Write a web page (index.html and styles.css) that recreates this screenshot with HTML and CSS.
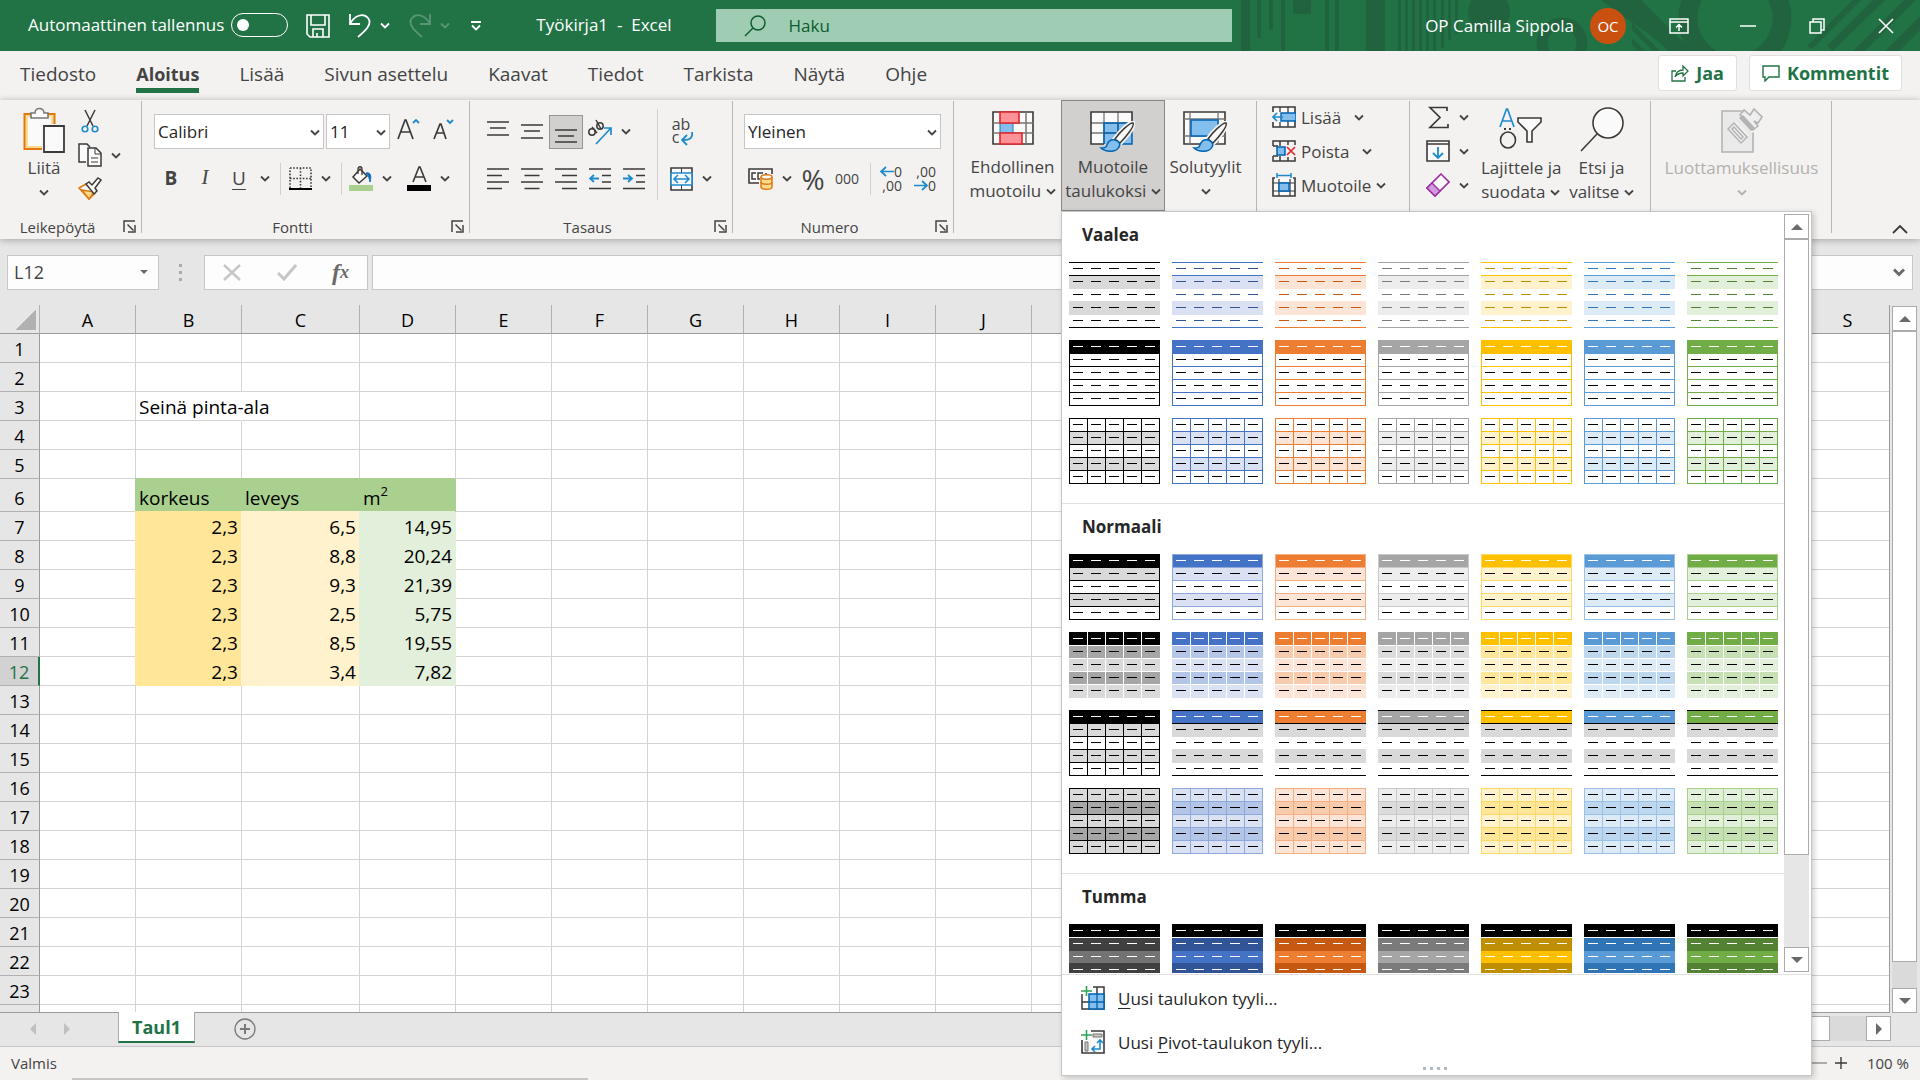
FILE: index.html
```html
<!DOCTYPE html>
<html lang="fi">
<head>
  <meta charset="UTF-8">
  <meta name="viewport" content="width=device-width, initial-scale=1.0">
  <title>Työkirja1 - Excel</title>
  <link rel="stylesheet" href="styles.css">
</head>
<body>
  <svg class="defs" aria-hidden="true">
    <symbol id="chev" viewBox="0 0 10 7"><path d="M1 1.5l4 4 4-4" fill="none" stroke="currentColor" stroke-width="1.8"/></symbol>
    <symbol id="launch" viewBox="0 0 13 13"><path d="M1 12V1h11M4.5 4.5l6 6M12 5v7H5" fill="none" stroke="currentColor" stroke-width="1.5"/></symbol>
    <symbol id="brush" viewBox="0 0 36 32">
      <path d="M34 2c-3-1-14 10-18 16l5 4C26 17 36 5 34 2z" fill="#fafafa" stroke="#f3f2f1" stroke-width="5"/>
      <path d="M34 2c-3-1-14 10-18 16l5 4C26 17 36 5 34 2z" fill="#fafafa" stroke="#3b3a39" stroke-width="1.5"/>
      <path d="M16 19c-5-1-7 2-8 5-1 3-3 3-6 3 4 4 15 5 18-1 2-3 0-6-4-7z" fill="#83beec" stroke="#0063b1" stroke-width="1.5"/>
    </symbol>
  </svg>

  <header class="titlebar">
    <svg class="titlebar-art" viewBox="0 0 685 51" aria-hidden="true">
      <g fill="#21633f">
        <path d="M6 0h9v51H6zM22 0h4v38h-4zM34 0h4v30h-4zM46 0h4v51h-4zM58 0h18v14H58zM90 0h4v51h-4zM100 0h4v51h-4zM131 0h19v51h-19z"/>
        <path d="M163 0h3v51h-3zM170 0h3v51h-3zM177 0h3v51h-3zM184 0h3v51h-3zM191 0h3v51h-3zM198 0h3v51h-3zM206 0h3v48h-3zM213 0h3v40h-3zM220 0h3v34h-3z"/>
        <circle cx="254" cy="12" r="21"/>
        <path d="M366 0h40l51 51h-20zM397 8l43 43h-7l-36-36zM397 23l28 28h-7l-21-21zM397 38l13 13h-7l-6-6z"/>
        <path d="M572 46L618 0h8l-49 49zM592 46L638 0h12l-52 51zM618 51L669 0h12l-51 51zM650 51l35-35v14l-21 21z"/>
      </g>
      <g fill="none" stroke="#21633f">
        <circle cx="327" cy="43" r="20" stroke-width="11"/>
        <circle cx="500" cy="18" r="47" stroke-width="19"/>
      </g>
    </svg>
    <label class="autosave">Automaattinen tallennus <input type="checkbox" role="switch"></label>
    <div class="quick">
      <button class="plain" aria-label="Tallenna"><svg width="24" height="24" viewBox="0 0 24 24"><path d="M1 1h22v22H4l-3-3zM5 1v10h14V1M7 23v-8h10v8M11 23v-4" fill="none" stroke="#fff" stroke-width="1.6"/></svg></button>
      <button class="plain" aria-label="Kumoa"><svg width="24" height="25" viewBox="0 0 24 25"><path d="M2 1v10h10M2 11C6 3 15-1 20 5c5 6-3 13-10 19" fill="none" stroke="#fff" stroke-width="1.8"/></svg></button>
      <button class="plain" aria-label="Kumoa, luettelo"><svg width="10" height="7"><use href="#chev"/></svg></button>
      <button class="plain faded" aria-label="Tee uudelleen"><svg width="24" height="25" viewBox="0 0 24 25"><path d="M22 1v10H12M22 11C18 3 9-1 4 5c-5 6 3 13 10 19" fill="none" stroke="#fff" stroke-width="1.8"/></svg></button>
      <button class="plain faded" aria-label="Tee uudelleen, luettelo"><svg width="10" height="7"><use href="#chev"/></svg></button>
      <button class="plain customize" aria-label="Mukauta pikatyökaluriviä"><svg width="12" height="10" viewBox="0 0 12 10"><path d="M1 1h10M2 4.5l4 4 4-4" fill="none" stroke="#fff" stroke-width="1.8"/></svg></button>
    </div>
    <div class="doc-title">Työkirja1&nbsp; -&nbsp; Excel</div>
    <label class="search">
      <svg width="22" height="22" viewBox="0 0 22 22"><circle cx="14" cy="8" r="7" fill="none" stroke="#0e5c2f" stroke-width="1.5"/><path d="M9 13l-8 8" stroke="#0e5c2f" stroke-width="1.5"/></svg>
      <input type="search" placeholder="Haku" aria-label="Haku">
    </label>
    <div class="account">OP Camilla Sippola <span class="avatar">OC</span></div>
    <div class="window-buttons">
      <button class="plain" aria-label="Valintanauhan näyttöasetukset"><svg width="20" height="16" viewBox="0 0 20 16"><path d="M1 1h18v14H1zM1 4h18M10 13V7M7 9.5L10 6.5l3 3" fill="none" stroke="#fff" stroke-width="1.5"/></svg></button>
      <button class="plain" aria-label="Pienennä"><svg width="16" height="16" viewBox="0 0 16 16"><path d="M0 8h16" stroke="#fff" stroke-width="1.5"/></svg></button>
      <button class="plain" aria-label="Palauta"><svg width="16" height="16" viewBox="0 0 16 16"><path d="M1 4h11v11H1zM4 4V1h11v11h-3" fill="none" stroke="#fff" stroke-width="1.5"/></svg></button>
      <button class="plain" aria-label="Sulje"><svg width="16" height="16" viewBox="0 0 16 16"><path d="M1 1l14 14M15 1L1 15" stroke="#fff" stroke-width="1.6"/></svg></button>
    </div>
  </header>

  <nav class="tabs">
    <a href="#">Tiedosto</a>
    <a href="#" class="active">Aloitus</a>
    <a href="#">Lisää</a>
    <a href="#">Sivun asettelu</a>
    <a href="#">Kaavat</a>
    <a href="#">Tiedot</a>
    <a href="#">Tarkista</a>
    <a href="#">Näytä</a>
    <a href="#">Ohje</a>
    <div class="share">
      <button><svg width="18" height="18" viewBox="0 0 18 18"><path d="M5 7H1v10h13v-4M4 13c1-5 4-7 8-7V2l5 5-5 5V9c-4 0-6 1-8 4z" fill="none" stroke="currentColor" stroke-width="1.3"/></svg>Jaa</button>
      <button><svg width="18" height="17" viewBox="0 0 18 17"><path d="M1 1h16v11H7l-4 4v-4H1z" fill="none" stroke="currentColor" stroke-width="1.4"/></svg>Kommentit</button>
    </div>
  </nav>

  <section class="ribbon">
    <div class="group clipboard">
      <div class="tools">
        <button class="big">
          <span class="big-icon"><svg width="42" height="46" viewBox="0 0 42 46">
            <path d="M1.5 7h30v35h-30z" fill="#fadb8f" stroke="#e07a10" stroke-width="2"/>
            <path d="M5 10h23v29H5z" fill="#fafafa"/>
            <path d="M8 11V6h4c0-6 9-6 9 0h4v5z" fill="#fafafa" stroke="#797774" stroke-width="1.6"/>
            <path d="M19 17h23v29H19z" fill="#f3f2f1"/>
            <path d="M21 19h20v26H21z" fill="#fafafa" stroke="#3b3a39" stroke-width="1.8"/></svg></span>
          Liitä<br><svg width="10" height="7"><use href="#chev"/></svg>
        </button>
        <div class="stack">
          <button class="tool single" aria-label="Leikkaa"><svg width="18" height="24" viewBox="0 0 18 24"><path d="M4 1l8 16M14 1L6 17" stroke="#3b3a39" stroke-width="1.5"/><g fill="none" stroke="#1e8bcd" stroke-width="1.6"><circle cx="4" cy="20" r="2.8"/><circle cx="14" cy="20" r="2.8"/></g></svg></button>
          <button class="tool split" aria-label="Kopioi"><svg width="24" height="24" viewBox="0 0 24 24"><path d="M8 19H1V1h8l3 3" fill="#fafafa" stroke="#3b3a39" stroke-width="1.5"/><path d="M10 5h8l5 5v13H10z" fill="#fafafa" stroke="#3b3a39" stroke-width="1.5"/><path d="M17 5v6h6M13 15h7M13 19h7" fill="none" stroke="#3b3a39"/></svg><svg width="10" height="7"><use href="#chev"/></svg></button>
          <button class="tool" aria-label="Muotoilusivellin"><svg width="24" height="24" viewBox="0 0 24 24"><path d="M8 7L1 11l10 11 6-6z" fill="#fafafa" stroke="#e07a10" stroke-width="1.6"/><path d="M4 13l12 2-5 7z" fill="#fadb8f" stroke="#e07a10" stroke-width="1.3"/><path d="M8 7l3-2 3 3 6-7 3 2-6 8 2 3-3 3z" fill="#fafafa" stroke="#3b3a39" stroke-width="1.5"/></svg></button>
        </div>
      </div>
      <div class="group-label">Leikepöytä<button class="plain launcher" aria-label="Leikepöytä, asetukset"><svg width="13" height="13"><use href="#launch"/></svg></button></div>
    </div>

    <div class="group font">
      <div class="tools rows">
        <div class="row">
          <span class="combo combo-font"><select aria-label="Fontti"><option>Calibri</option></select><svg width="10" height="7"><use href="#chev"/></svg></span>
          <span class="combo combo-size"><select aria-label="Fonttikoko"><option>11</option></select><svg width="10" height="7"><use href="#chev"/></svg></span>
          <button class="tool resize" aria-label="Suurenna fonttia"><svg width="24" height="22" viewBox="0 0 24 22"><path d="M1 21L8 2h1l7 19M4 14h9" fill="none" stroke="#3b3a39" stroke-width="1.7"/><path d="M16 5l3-3 3 3" fill="none" stroke="#1e8bcd" stroke-width="1.8"/></svg></button>
          <button class="tool resize" aria-label="Pienennä fonttia"><svg width="24" height="22" viewBox="0 0 24 22"><path d="M3 21L9 6h1l5 15M5 15h8" fill="none" stroke="#3b3a39" stroke-width="1.7"/><path d="M16 2l3 3 3-3" fill="none" stroke="#1e8bcd" stroke-width="1.8"/></svg></button>
        </div>
        <div class="row">
          <button class="tool bold">B</button>
          <button class="tool italic">I</button>
          <button class="tool underline">U</button>
          <button class="arrow" aria-label="Alleviivaus, luettelo"><svg width="10" height="7"><use href="#chev"/></svg></button>
          <span class="sep"></span>
          <button class="tool" aria-label="Reunat"><svg width="23" height="23" viewBox="0 0 23 23"><path d="M1 1h21v20M1 21V1M11.5 1v20M1 11.5h21" fill="none" stroke="#3b3a39" stroke-width="1.6" stroke-dasharray="1.6 1.6"/><path d="M0 22h23" stroke="#000" stroke-width="2"/></svg></button>
          <button class="arrow" aria-label="Reunat, luettelo"><svg width="10" height="7"><use href="#chev"/></svg></button>
          <span class="sep"></span>
          <button class="tool" aria-label="Täyttöväri"><svg width="24" height="25" viewBox="0 0 24 25"><path d="M11 3l7 7-8 7-6-6z" fill="#fafafa" stroke="#3b3a39" stroke-width="1.5"/><path d="M9 8V3c0-3 4-3 4 0v6" fill="none" stroke="#3b3a39" stroke-width="1.3"/><path d="M17 7c4-1 6 2 4 9-1-4-1-6-4-9z" fill="#0f6cbd" stroke="#0f6cbd"/><path d="M0 19h24v6H0z" fill="#a9d08e"/></svg></button>
          <button class="arrow" aria-label="Täyttöväri, luettelo"><svg width="10" height="7"><use href="#chev"/></svg></button>
          <button class="tool spaced" aria-label="Fontin väri"><svg width="24" height="25" viewBox="0 0 24 25"><path d="M6 16l6-15h1l6 15M8 11h9" fill="none" stroke="#3b3a39" stroke-width="1.6"/><path d="M0 19h24v6H0z"/></svg></button>
          <button class="arrow" aria-label="Fontin väri, luettelo"><svg width="10" height="7"><use href="#chev"/></svg></button>
        </div>
      </div>
      <div class="group-label">Fontti<button class="plain launcher" aria-label="Fontti, asetukset"><svg width="13" height="13"><use href="#launch"/></svg></button></div>
    </div>

    <div class="group align">
      <div class="tools">
        <div class="rows">
          <div class="row">
            <button class="tool" aria-label="Tasaa ylös"><svg width="22" height="24" viewBox="0 0 22 24"><path d="M0 2h22M3 8h16M0 15h22" stroke="#3b3a39" stroke-width="1.6"/></svg></button>
            <button class="tool" aria-label="Tasaa keskelle pystysuunnassa"><svg width="22" height="24" viewBox="0 0 22 24"><path d="M0 5h22M3 11h16M0 18h22" stroke="#3b3a39" stroke-width="1.6"/></svg></button>
            <button class="tool pressed" aria-label="Tasaa alas" aria-pressed="true"><svg width="22" height="24" viewBox="0 0 22 24"><path d="M0 10h22M3 16h16M0 22h22" stroke="#3b3a39" stroke-width="1.6"/></svg></button>
            <button class="tool" aria-label="Suunta"><svg width="26" height="26" viewBox="0 0 26 26"><g fill="none" stroke="#3b3a39" stroke-width="1.5"><circle cx="5" cy="13" r="3.2"/><path d="M5 8l5 6M9 1l5 9"/><circle cx="13" cy="7" r="3.2"/></g><path d="M9 25L24 9M17 9h7v7" fill="none" stroke="#1e8bcd" stroke-width="1.7"/></svg></button>
            <button class="arrow" aria-label="Suunta, luettelo"><svg width="10" height="7"><use href="#chev"/></svg></button>
          </div>
          <div class="row">
            <button class="tool" aria-label="Tasaa vasemmalle"><svg width="22" height="22" viewBox="0 0 22 22"><path d="M0 1h22M0 7.5h15M0 14h22M0 20.5h15" stroke="#3b3a39" stroke-width="1.6"/></svg></button>
            <button class="tool" aria-label="Keskitä"><svg width="22" height="22" viewBox="0 0 22 22"><path d="M0 1h22M3.5 7.5h15M0 14h22M3.5 20.5h15" stroke="#3b3a39" stroke-width="1.6"/></svg></button>
            <button class="tool" aria-label="Tasaa oikealle"><svg width="22" height="22" viewBox="0 0 22 22"><path d="M0 1h22M7 7.5h15M0 14h22M7 20.5h15" stroke="#3b3a39" stroke-width="1.6"/></svg></button>
            <button class="tool" aria-label="Pienennä sisennystä"><svg width="22" height="22" viewBox="0 0 22 22"><path d="M0 1h22M13 7.5h9M13 14h9M0 20.5h22" stroke="#3b3a39" stroke-width="1.6"/><path d="M10 10.5H1M5 7l-4 3.5L5 14" fill="none" stroke="#1e8bcd" stroke-width="1.8"/></svg></button>
            <button class="tool" aria-label="Suurenna sisennystä"><svg width="22" height="22" viewBox="0 0 22 22"><path d="M0 1h22M13 7.5h9M13 14h9M0 20.5h22" stroke="#3b3a39" stroke-width="1.6"/><path d="M0 10.5h9M5 7l4 3.5L5 14" fill="none" stroke="#1e8bcd" stroke-width="1.8"/></svg></button>
          </div>
        </div>
        <span class="sep tall"></span>
        <div class="rows">
          <div class="row">
            <button class="tool wrap-text" aria-label="Rivitä teksti"><span>ab<br>c</span><svg width="12" height="14" viewBox="0 0 12 14"><path d="M11 0c1 6-2 8-9 8M6 3L1 8l5 5" fill="none" stroke="#1e8bcd" stroke-width="1.8"/></svg></button>
          </div>
          <div class="row">
            <button class="tool" aria-label="Yhdistä ja keskitä"><svg width="23" height="24" viewBox="0 0 23 24"><path d="M1 1h21v22H1z" fill="#fafafa" stroke="#3b3a39" stroke-width="1.6"/><path d="M11.5 1v22" stroke="#3b3a39"/><path d="M1 6h21v12H1z" fill="#fafafa" stroke="#1e8bcd" stroke-width="1.6"/><path d="M4 12h15M8 8l-4 4 4 4M15 8l4 4-4 4" fill="none" stroke="#1e8bcd" stroke-width="1.6"/></svg></button>
            <button class="arrow" aria-label="Yhdistä, luettelo"><svg width="10" height="7"><use href="#chev"/></svg></button>
          </div>
        </div>
      </div>
      <div class="group-label">Tasaus<button class="plain launcher" aria-label="Tasaus, asetukset"><svg width="13" height="13"><use href="#launch"/></svg></button></div>
    </div>

    <div class="group number">
      <div class="tools rows">
        <div class="row">
          <span class="combo combo-format"><select aria-label="Lukumuotoilu"><option>Yleinen</option></select><svg width="10" height="7"><use href="#chev"/></svg></span>
        </div>
        <div class="row">
          <button class="tool" aria-label="Kirjanpidon lukumuotoilu"><svg width="26" height="22" viewBox="0 0 26 22"><path d="M11 15H1V1h23v5" fill="#fafafa" stroke="#3b3a39" stroke-width="1.6"/><path d="M8 5H4v6h4M15 5h-5v6h2M18 5v3" fill="none" stroke="#3b3a39" stroke-width="1.5"/><path d="M13 9v10c0 3 11 3 11 0V9" fill="#fadb8f" stroke="#e07a10" stroke-width="1.5"/><path d="M13 14c0 3 11 3 11 0" fill="none" stroke="#e07a10" stroke-width="1.5"/><ellipse cx="18.5" cy="9" rx="5.5" ry="2.2" fill="#fff" stroke="#e07a10" stroke-width="1.5"/></svg></button>
          <button class="arrow" aria-label="Kirjanpidon lukumuotoilu, luettelo"><svg width="10" height="7"><use href="#chev"/></svg></button>
          <button class="tool percent">%</button>
          <button class="tool thousands">000</button>
          <span class="sep"></span>
          <button class="tool decimals" aria-label="Lisää desimaaleja"><span><svg width="14" height="11" viewBox="0 0 14 11"><path d="M14 5.5H1M6 1L1 5.5 6 10" fill="none" stroke="#1e8bcd" stroke-width="1.7"/></svg>0</span><span>,00</span></button>
          <button class="tool decimals" aria-label="Vähennä desimaaleja"><span>,00</span><span><svg width="14" height="11" viewBox="0 0 14 11"><path d="M0 5.5h13M8 1l5 4.5L8 10" fill="none" stroke="#1e8bcd" stroke-width="1.7"/></svg>0</span></button>
        </div>
      </div>
      <div class="group-label">Numero<button class="plain launcher" aria-label="Numero, asetukset"><svg width="13" height="13"><use href="#launch"/></svg></button></div>
    </div>

    <div class="group styles">
      <div class="tools">
        <button class="big wide">
          <span class="big-icon"><svg width="42" height="34" viewBox="0 0 42 34"><path d="M1 1h40v32H1z" fill="#fafafa" stroke="#3b3a39" stroke-width="1.6"/><path d="M1 12h40M1 22h40M34 1v32" stroke="#797774" stroke-width="1.5"/><path d="M8 12h13v10H8z" fill="#83beec" stroke="#1e78c0"/><path d="M8 1h19v11H8zM8 22h22v11H8z" fill="#ff9297" stroke="#e3262b" stroke-width="1.6"/></svg></span>
          Ehdollinen<br>muotoilu <svg width="10" height="7"><use href="#chev"/></svg>
        </button>
        <div class="menu-anchor">
          <button class="big open" aria-expanded="true">
            <span class="big-icon"><svg width="46" height="42" viewBox="0 0 46 42"><path d="M1 1h41v32H1z" fill="#fafafa"/><path d="M14 12h28v21H14z" fill="#83beec"/><path d="M1 12h41M1 22h41M14 1v32M28 1v32" stroke="#797774" stroke-width="1.3"/><path d="M14 33V12h28M14 22h28M28 12v21M42 12v21H28" fill="none" stroke="#0063b1" stroke-width="1.5"/><path d="M14 33H1V1h41v11" fill="none" stroke="#3b3a39" stroke-width="1.6"/><use href="#brush" x="9" y="10" width="36" height="32"/></svg></span>
            Muotoile<br>taulukoksi <svg width="10" height="7"><use href="#chev"/></svg>
          </button>
          <div class="gallery">
            <div class="gallery-scroll">
              <div class="gallery-list" id="gallery"></div>
              <div class="scrollbar">
                <button aria-label="Ylös"><span class="tri up"></span></button>
                <div class="thumb"></div>
                <div class="track"></div>
                <button aria-label="Alas"><span class="tri down"></span></button>
              </div>
            </div>
            <button class="menu-item"><svg width="24" height="24" viewBox="0 0 24 24"><path d="M1 8v15h22V1H12M1 16h8M16 1v7" fill="none" stroke="#3b3a39" stroke-width="1.5"/><path d="M8 8h15v15H8z" fill="#83beec" stroke="#0063b1" stroke-width="1.5"/><path d="M8 16h15M16 8v15" stroke="#0063b1" stroke-width="1.3"/><path d="M5.5 0v10M0 5h11" stroke="#31a354" stroke-width="1.6"/></svg><span><u>U</u>usi taulukon tyyli...</span></button>
            <button class="menu-item"><svg width="24" height="24" viewBox="0 0 24 24"><path d="M1 10v13h22V1H10" fill="#fafafa" stroke="#3b3a39" stroke-width="1.6"/><path d="M12 4h9v3h-9zM4 12h3v9H4z" fill="#c8c6c4" stroke="#797774"/><path d="M19 10v9h-8M16 13l3-3 3 3M14 16l-3 3 3 3" fill="none" stroke="#1e8bcd" stroke-width="1.6"/><path d="M5.5 0v10M0 5h11" stroke="#31a354" stroke-width="1.6"/></svg><span>Uusi <u>P</u>ivot-taulukon tyyli...</span></button>
            <div class="grip"><i></i><i></i><i></i><i></i></div>
          </div>
        </div>
        <button class="big">
          <span class="big-icon"><svg width="46" height="42" viewBox="0 0 46 42"><path d="M1 1h41v32H1z" fill="#fafafa" stroke="#3b3a39" stroke-width="1.6"/><path d="M1 8h41M1 25h41M7 1v32M35 1v32" stroke="#797774" stroke-width="1.3"/><path d="M8 9h27v16H8z" fill="#83beec" stroke="#0063b1" stroke-width="1.5"/><use href="#brush" x="9" y="10" width="36" height="32"/></svg></span>
          Solutyylit<br><svg width="10" height="7"><use href="#chev"/></svg>
        </button>
      </div>
    </div>

    <div class="group cells">
      <div class="stack">
        <button class="line"><svg width="24" height="22" viewBox="0 0 24 22"><path d="M1 1h22v20H1z" fill="#fafafa" stroke="#3b3a39" stroke-width="1.6"/><path d="M8 1v20M16 1v20" stroke="#3b3a39" stroke-width="1.3"/><path d="M0 6h9v10H0z" fill="#f3f2f1"/><path d="M9 7h15v8H9z" fill="#83beec" stroke="#0063b1" stroke-width="1.4"/><path d="M11 11H1M5 7l-4 4 4 4" fill="none" stroke="#1e8bcd" stroke-width="1.6"/></svg>Lisää<svg class="far" width="10" height="7"><use href="#chev"/></svg></button>
        <button class="line"><svg width="24" height="22" viewBox="0 0 24 22"><path d="M1 6V1h22v4M1 16v5h22v-4M8 1v5M16 1v4M8 16v5M16 17v4M1 6h5M1 16h5" fill="none" stroke="#3b3a39" stroke-width="1.5"/><path d="M5 7h8v8H5z" fill="#83beec" stroke="#0063b1" stroke-width="1.5"/><path d="M15 7l8 8M23 7l-8 8" stroke="#e3262b" stroke-width="1.7"/></svg>Poista<svg class="far" width="10" height="7"><use href="#chev"/></svg></button>
        <button class="line"><svg width="24" height="24" viewBox="0 0 24 24"><path d="M3 5H1v18h22V5h-2" fill="#fafafa" stroke="#3b3a39" stroke-width="1.6"/><path d="M1 10h22M1 18h22M7 6v17M18 6v17" stroke="#3b3a39" stroke-width="1.2"/><path d="M7 10h10v8H7z" fill="#83beec" stroke="#0063b1" stroke-width="1.4"/><path d="M5 0v5M19 0v5M5 2.5h14" stroke="#1e8bcd" stroke-width="1.5"/></svg>Muotoile<svg class="near" width="10" height="7"><use href="#chev"/></svg></button>
      </div>
    </div>

    <div class="group editing">
      <div class="tools">
        <div class="stack">
          <button class="tool split" aria-label="Summa"><svg width="24" height="23" viewBox="0 0 24 23"><path d="M21 5V1.5H4L14 11.5 4 21.5h18V18" fill="none" stroke="#3b3a39" stroke-width="1.7"/></svg><svg width="10" height="7"><use href="#chev"/></svg></button>
          <button class="tool split" aria-label="Täyttö"><svg width="24" height="22" viewBox="0 0 24 22"><path d="M1 1h22v20H1zM1 4h22" fill="#fafafa" stroke="#3b3a39" stroke-width="1.6"/><path d="M12 7v11M7 13l5 5 5-5" fill="none" stroke="#1e8bcd" stroke-width="1.8"/></svg><svg width="10" height="7"><use href="#chev"/></svg></button>
          <button class="tool split" aria-label="Tyhjennä"><svg width="24" height="24" viewBox="0 0 24 24"><path d="M15 1l8 8L9 23l-8-8z" fill="#fafafa" stroke="#9b2fa0" stroke-width="1.6"/><path d="M6 10l8 8-5 5-8-8z" fill="#d59add" stroke="#9b2fa0" stroke-width="1.4"/></svg><svg width="10" height="7"><use href="#chev"/></svg></button>
        </div>
        <button class="big">
          <span class="big-icon"><svg width="44" height="42" viewBox="0 0 44 42"><path d="M1 20L7.5 2h1L15 20M4 14h9" fill="none" stroke="#1e8bcd" stroke-width="1.7"/><ellipse cx="9" cy="33" rx="7.5" ry="8" fill="none" stroke="#3b3a39" stroke-width="1.6"/><path d="M5 22h2M10 22h2" stroke="#3b3a39" stroke-width="2"/><path d="M19 11h23v4l-9 9v11h-5V24l-9-9z" fill="#fafafa" stroke="#3b3a39" stroke-width="1.6"/></svg></span>
          Lajittele ja<br>suodata <svg width="10" height="7"><use href="#chev"/></svg>
        </button>
        <button class="big">
          <span class="big-icon"><svg width="44" height="46" viewBox="0 0 44 46"><circle cx="28" cy="16" r="15" fill="#fafafa" stroke="#3b3a39" stroke-width="1.6"/><path d="M17 27L1 44" stroke="#3b3a39" stroke-width="1.6"/></svg></span>
          Etsi ja<br>valitse <svg width="10" height="7"><use href="#chev"/></svg>
        </button>
      </div>
    </div>

    <div class="group sensitivity">
      <button class="big" disabled>
        <span class="big-icon"><svg width="42" height="46" viewBox="0 0 42 46"><path d="M1 4h31v41H1z" fill="#eaeaea" stroke="#b3b3b3" stroke-width="1.6"/><path d="M6 22l9-8 13 14-8 8zM17 9l6-7 15 2 4 8-5 11-6 3z" fill="#f3f2f1"/><path d="M7 22l6-6 13 14-6 6zM11 22l9 10 2-2-9-10z" fill="#eee" stroke="#b3b3b3" stroke-width="1.5"/><path d="M19 8l4-5 6 5 4-6 8 8-4 6-4-2 4 5-5 4z" fill="#eee" stroke="#b3b3b3" stroke-width="1.6"/><path d="M18 11l4-3 12 13-4 3z" fill="#b3b3b3"/></svg></span>
        Luottamuksellisuus<br><svg width="10" height="7"><use href="#chev"/></svg>
      </button>
    </div>
    <button class="plain collapse" aria-label="Kutista valintanauha"><svg width="16" height="10" viewBox="0 0 16 10"><path d="M1 9l7-7 7 7" fill="none" stroke="#3b3a39" stroke-width="1.8"/></svg></button>
  </section>

  <div class="formula-bar">
    <div class="name-box"><input type="text" value="L12" aria-label="Nimiruutu"><span class="tri down small"></span></div>
    <div class="dots"><i></i><i></i><i></i></div>
    <div class="fx-box">
      <button class="plain" aria-label="Peruuta"><svg width="18" height="17" viewBox="0 0 18 17"><path d="M1 1l16 15M17 1L1 16" stroke="#c6c6c6" stroke-width="2.4"/></svg></button>
      <button class="plain" aria-label="Hyväksy"><svg width="20" height="17" viewBox="0 0 20 17"><path d="M1 9l6 6L19 1" fill="none" stroke="#c6c6c6" stroke-width="3"/></svg></button>
      <button class="plain fx" aria-label="Lisää funktio">f<span>x</span></button>
    </div>
    <div class="formula-input"><input type="text" aria-label="Kaavarivi"><svg width="12" height="9" viewBox="0 0 12 9"><path d="M1 1.5l5 5 5-5" fill="none" stroke="#6a6a6a" stroke-width="3"/></svg></div>
  </div>

  <main class="sheet">
    <div class="sheet-grid"><table id="grid"></table></div>
    <div class="scrollbar">
      <button aria-label="Ylös"><span class="tri up"></span></button>
      <div class="thumb"></div>
      <div class="track"></div>
      <button aria-label="Alas"><span class="tri down"></span></button>
    </div>
  </main>

  <div class="sheet-bar">
    <button class="plain" aria-label="Edellinen taulukko"><span class="tri left"></span></button>
    <button class="plain" aria-label="Seuraava taulukko"><span class="tri right"></span></button>
    <button class="sheet-tab">Taul1</button>
    <button class="plain" aria-label="Uusi taulukko"><svg width="22" height="22" viewBox="0 0 22 22"><circle cx="11" cy="11" r="10" fill="none" stroke="#797979" stroke-width="1.3"/><path d="M11 6v10M6 11h10" stroke="#797979" stroke-width="2"/></svg></button>
    <div class="scrollbar horizontal">
      <button aria-label="Vasemmalle"><span class="tri left"></span></button>
      <div class="thumb"></div>
      <div class="track"></div>
      <button aria-label="Oikealle"><span class="tri right"></span></button>
    </div>
  </div>

  <footer class="status">
    <span>Valmis</span>
    <input type="range" aria-label="Zoomaus">
    <button class="plain" aria-label="Lähennä"><svg width="12" height="12" viewBox="0 0 12 12"><path d="M6 0v12M0 6h12" stroke="#3b3a39" stroke-width="1.4"/></svg></button>
    <span>100 %</span>
  </footer>

  <script src="script.js"></script>
</body>
</html>
```
FILE: styles.css
```css
* {
  box-sizing: border-box;
}
body {
  margin: 0;
  height: 100vh;
  display: flex;
  flex-direction: column;
  overflow: hidden;
  font-family: "Open Sans", "Noto Sans", sans-serif;
  font-size: 17px;
  color: #444;
  background: #e6e6e6;
}
button, input, select {
  font: inherit;
  color: inherit;
  border: none;
  background: none;
  padding: 0;
  margin: 0;
}
input:focus, select:focus {
  outline: none;
}
svg {
  flex: none;
}
.defs {
  position: absolute;
  width: 0;
  height: 0;
}
.plain {
  display: flex;
  align-items: center;
  justify-content: center;
}

/* title bar */
.titlebar {
  position: relative;
  display: flex;
  align-items: center;
  height: 51px;
  flex: none;
  padding-left: 28px;
  background: #217346;
  color: #fff;
}
.titlebar > * {
  position: relative;
}
.titlebar .titlebar-art {
  position: absolute;
  right: 0;
  top: 0;
  width: 685px;
  height: 51px;
}
.autosave {
  display: flex;
  align-items: center;
  gap: 7px;
  padding-bottom: 2px;
  white-space: nowrap;
}
.autosave input {
  appearance: none;
  width: 57px;
  height: 24px;
  border: 1px solid #fff;
  border-radius: 12px;
  display: flex;
  align-items: center;
  padding-left: 5px;
}
.autosave input::before {
  content: "";
  width: 12px;
  height: 12px;
  border-radius: 50%;
  background: #fff;
}
.quick {
  display: flex;
  align-items: center;
  gap: 8px;
  margin-left: 18px;
}
.quick .plain:nth-child(2), .quick .plain:nth-child(4) {
  margin-left: 10px;
}
.quick .customize {
  margin-left: 12px;
}
.faded {
  opacity: 0.25;
}
.doc-title {
  margin-left: 54px;
  padding-bottom: 3px;
  white-space: nowrap;
}
.search {
  display: flex;
  align-items: center;
  gap: 23px;
  flex: 1;
  max-width: 516px;
  height: 33px;
  margin-left: 44px;
  padding-left: 28px;
  background: #9fcdb3;
  color: #0e5c2f;
}
.search input {
  flex: 1;
}
.search input::placeholder {
  color: #0e5c2f;
}
.account {
  display: flex;
  align-items: center;
  gap: 16px;
  margin-left: auto;
}
.avatar {
  width: 36px;
  height: 36px;
  border-radius: 50%;
  background: #ca5010;
  font-size: 15px;
  line-height: 36px;
  text-align: center;
}
.window-buttons {
  display: flex;
  margin-left: 18px;
}
.window-buttons .plain {
  width: 69px;
}

/* tabs */
.tabs {
  display: flex;
  align-items: flex-start;
  gap: 40px;
  height: 49px;
  flex: none;
  padding: 4px 18px 0 20px;
  background: #f3f2f1;
  font-size: 19px;
}
.tabs a {
  color: #444;
  text-decoration: none;
  line-height: 28px;
  padding-top: 5px;
  border-bottom: 5px solid transparent;
}
.tabs a.active {
  font-weight: 700;
  font-size: 18px;
  border-color: #217346;
}
.share {
  display: flex;
  gap: 12px;
  margin-left: auto;
}
.share button {
  display: flex;
  align-items: center;
  gap: 7px;
  height: 36px;
  padding: 0 12px;
  border: 1px solid #e1dfdd;
  border-radius: 3px;
  background: #fff;
  color: #217346;
  font-size: 18px;
  font-weight: 700;
}

/* ribbon */
.ribbon {
  position: relative;
  z-index: 2;
  display: flex;
  height: 139px;
  flex: none;
  background: #f3f2f1;
  box-shadow: 0 1px 7px rgba(0, 0, 0, 0.3);
}
.group {
  position: relative;
  display: flex;
  flex-direction: column;
  flex: none;
}
.group::after {
  content: "";
  position: absolute;
  right: 0;
  top: 1px;
  bottom: 6px;
  width: 1px;
  background: #b9b7b5;
}
.tools {
  display: flex;
  height: 111px;
}
.group-label {
  display: flex;
  align-items: center;
  justify-content: center;
  height: 28px;
  padding-right: 27px;
  padding-top: 3px;
  font-size: 15px;
}
.launcher {
  position: absolute;
  right: 6px;
}
.rows {
  display: flex;
  flex-direction: column;
  gap: 12px;
  padding-top: 14px;
}
.row {
  display: flex;
  align-items: center;
  height: 35px;
}
.stack {
  display: flex;
  flex-direction: column;
}
.tool {
  display: flex;
  align-items: center;
  justify-content: center;
  width: 34px;
  height: 34px;
}
.tool.split {
  width: auto;
  gap: 9px;
}
.tool.pressed {
  background: #d2d0ce;
  border: 1px solid #979593;
}
.tool.spaced {
  margin-left: 6px;
}
.tool.resize {
  padding-bottom: 6px;
}
.arrow {
  display: flex;
  align-items: center;
  justify-content: center;
  width: 18px;
  height: 34px;
}
.bold, .italic, .underline {
  font-size: 19px;
  padding-bottom: 2px;
}
.bold {
  font-weight: 700;
}
.italic {
  font-family: "Liberation Serif", serif;
  font-style: italic;
  font-size: 21px;
}
.underline {
  text-decoration: underline;
  text-underline-offset: 4px;
}
.sep {
  width: 1px;
  height: 32px;
  margin: 0 2px 0 6px;
  background: #d2d0ce;
}
.sep.tall {
  height: 91px;
  margin: 9px 6px 0;
}
.combo {
  position: relative;
  display: flex;
  height: 35px;
  margin-right: 2px;
}
.combo select {
  appearance: none;
  flex: 1;
  min-width: 0;
  padding-left: 3px;
  border: 1px solid #c8c6c4;
  background: #fff;
  color: #262626;
}
.combo svg {
  position: absolute;
  right: 4px;
  top: 15px;
  pointer-events: none;
}
.combo-font {
  width: 170px;
}
.combo-size {
  width: 64px;
}
.combo-format {
  width: 197px;
}
.wrap-text {
  position: relative;
  font-size: 16px;
  line-height: 13px;
  text-align: left;
  padding-bottom: 2px;
}
.wrap-text svg {
  position: absolute;
  right: 5px;
  bottom: 3px;
}
.percent {
  font-size: 28px;
}
.thousands {
  font-size: 14px;
}
.decimals {
  flex-direction: column;
  align-items: flex-end;
  padding-right: 5px;
  font-size: 14px;
  line-height: 14px;
}
.big {
  width: 81px;
  height: 111px;
  padding: 10px 0 7px;
  border: 1px solid transparent;
  display: block;
  line-height: 24px;
  text-align: center;
  vertical-align: top;
  white-space: nowrap;
}
.big > svg {
  vertical-align: 2px;
}
.big-icon {
  display: flex;
  justify-content: center;
  height: 44px;
}
.big.wide {
  width: 97px;
}
.big.open {
  width: 104px;
  background: #d2d0ce;
  border-color: #8a8886;
}
.big:disabled {
  color: #b3b0ad;
}
.clipboard .big, .editing .big, .sensitivity .big {
  padding: 6px 0;
}
.clipboard .big-icon, .editing .big-icon, .sensitivity .big-icon {
  height: 49px;
}
.clipboard {
  width: 142px;
}
.clipboard .big {
  width: 78px;
  padding-left: 10px;
}
.clipboard .tool {
  justify-content: flex-start;
}
.clipboard .single {
  padding-left: 3px;
}
.clipboard .stack {
  padding-top: 4px;
}
.font {
  width: 328px;
  padding-left: 12px;
}
.align {
  width: 263px;
  padding-left: 11px;
}
.number {
  width: 221px;
  padding-left: 11px;
}
.font .group-label, .align .group-label, .number .group-label {
  padding-right: 39px;
}
.styles {
  width: 303px;
  padding-left: 10px;
}
.cells {
  width: 153px;
  padding-left: 15px;
}
.line {
  display: flex;
  align-items: center;
  gap: 5px;
  height: 34px;
}
.line .far {
  margin-left: 8px;
}
.editing {
  width: 241px;
  padding-left: 16px;
}
.editing .stack {
  width: 54px;
}
.editing .tool {
  justify-content: flex-start;
}
.sensitivity {
  width: 181px;
}
.sensitivity .big {
  width: 100%;
}
.collapse {
  margin: auto 12px 5px auto;
}

/* table style gallery */
.menu-anchor {
  position: relative;
  z-index: 3;
}
.gallery {
  position: absolute;
  left: 0;
  top: 111px;
  width: 751px;
  height: calc(100vh - 215px);
  display: flex;
  flex-direction: column;
  background: #fff;
  border: 1px solid #c6c6c6;
  box-shadow: 2px 2px 6px rgba(0, 0, 0, 0.2);
  color: #262626;
}
.gallery-scroll {
  display: flex;
  flex: 1;
  min-height: 0;
  padding-right: 2px;
  border-bottom: 1px solid #e1e1e1;
}
.gallery-list {
  flex: 1;
  overflow: hidden;
  margin-bottom: 1px;
}
.gallery-section {
  padding-bottom: 19px;
  border-bottom: 1px solid #e1e1e1;
}
.gallery-section h3 {
  margin: 0;
  padding-left: 20px;
  height: 50px;
  line-height: 45px;
  font-size: 17px;
  font-weight: 700;
}
.swatches {
  display: grid;
  grid-template-columns: repeat(7, 91px);
  gap: 12px;
  padding-left: 7px;
}
.swatches button, .swatches svg {
  display: block;
  width: 91px;
  height: 66px;
}
.gallery .scrollbar {
  margin: 2px 0;
}
.menu-item {
  display: flex;
  align-items: center;
  gap: 13px;
  height: 44px;
  padding: 2px 0 0 19px;
  flex: none;
}
.menu-item u {
  text-underline-offset: 3px;
}
.grip {
  display: flex;
  justify-content: center;
  gap: 4px;
  height: 12px;
  padding: 4px 4px 0 0;
}
.grip i {
  width: 3px;
  height: 3px;
  background: #b4bbc8;
}

/* scroll bars */
.scrollbar {
  display: flex;
  flex-direction: column;
  flex: none;
  width: 25px;
}
.scrollbar button {
  display: flex;
  align-items: center;
  justify-content: center;
  width: 25px;
  height: 25px;
  flex: none;
  background: #fff;
  border: 1px solid #ababab;
}
.scrollbar .thumb {
  flex: 87 0 0;
  background: #fff;
  border: 1px solid #ababab;
}
.scrollbar .track {
  flex: 13 0 0;
  background: #e6e6e6;
}
.tri {
  width: 0;
  height: 0;
  border: 6px solid transparent;
}
.tri.up {
  border-top: none;
  border-bottom-color: #6a6a6a;
}
.tri.down {
  border-bottom: none;
  border-top-color: #6a6a6a;
}
.tri.left {
  border-left: none;
  border-right-color: #6a6a6a;
}
.tri.right {
  border-right: none;
  border-left-color: #6a6a6a;
}
.tri.small {
  border-width: 4px;
  border-bottom: none;
}

/* formula bar */
.formula-bar {
  display: flex;
  align-items: center;
  height: 66px;
  flex: none;
  padding: 0 7px;
}
.name-box, .fx-box, .formula-input {
  display: flex;
  align-items: center;
  height: 35px;
  background: #fdfdfd;
  border: 1px solid #c6c6c6;
}
.name-box {
  width: 152px;
  padding: 0 10px 0 6px;
  font-size: 18px;
}
.name-box input {
  flex: 1;
  min-width: 0;
}
.dots {
  display: flex;
  flex-direction: column;
  gap: 4px;
  width: 45px;
  padding-left: 20px;
}
.dots i {
  width: 3px;
  height: 3px;
  background: #ababab;
}
.fx-box {
  width: 164px;
  justify-content: space-between;
  padding: 0 18px;
}
.fx {
  font: italic bold 24px/24px "Liberation Serif", serif;
  color: #6a6a6a;
}
.fx span {
  font-size: 18px;
}
.formula-input {
  flex: 1;
  margin-left: 4px;
  padding-right: 7px;
}
.formula-input input {
  flex: 1;
}

/* sheet */
.sheet {
  display: flex;
  flex: 1;
  min-height: 0;
  gap: 2px;
  padding-right: 3px;
}
.sheet-grid {
  flex: 1;
  overflow: hidden;
  border-right: 1px solid #9b9b9b;
  border-bottom: 1px solid #9b9b9b;
}
#grid {
  table-layout: fixed;
  width: 0;
  border-collapse: separate;
  border-spacing: 0;
  font-size: 19px;
  line-height: 22px;
  color: #000;
}
#grid th, #grid td {
  padding: 2px 3px;
  height: 29px;
  white-space: nowrap;
  vertical-align: bottom;
}
#grid th {
  padding: 2px 0;
  background: #e6e6e6;
  border-right: 1px solid #b1b1b1;
  border-bottom: 1px solid #b1b1b1;
  font-size: 18px;
  font-weight: 400;
}
#grid thead th {
  border-bottom-color: #9b9b9b;
}
#grid tbody th {
  border-right-color: #9b9b9b;
}
#grid .corner {
  background: linear-gradient(135deg, transparent 50%, #b1b1b1 50%) 15px 4px / 21px 21px no-repeat #e6e6e6;
}
#grid td {
  background: #fff;
  border-right: 1px solid #d4d4d4;
  border-bottom: 1px solid #d4d4d4;
}
#grid .tall th, #grid .tall td {
  height: 33px;
}
#grid tbody .current {
  background: #d2d2d2;
  color: #217346;
  border-right: 2px solid #217346;
}
#grid .spill {
  border-right-color: #fff;
}
#grid .num {
  text-align: right;
}
#grid .head {
  background: #a9d08e;
  border-color: #a9d08e;
  box-shadow: -1px -1px 0 #a9d08e;
}
#grid .height {
  background: #ffe699;
  border-color: #ffe699;
  box-shadow: -1px -1px 0 #ffe699;
}
#grid .width {
  background: #fff2cc;
  border-color: #fff2cc;
  box-shadow: -1px -1px 0 #fff2cc;
}
#grid .area {
  background: #e2efda;
  border-color: #e2efda;
  box-shadow: -1px -1px 0 #e2efda;
}
#grid sup {
  font-size: 13px;
  line-height: 0;
  vertical-align: 9px;
}
.sheet .scrollbar {
  padding-top: 1px;
}
.sheet .scrollbar .thumb {
  flex-grow: 96;
}
.sheet .scrollbar .track {
  flex-grow: 4;
  background: #dadada;
}
.sheet-bar {
  display: flex;
  align-items: flex-start;
  height: 33px;
  flex: none;
  padding: 0 29px 0 30px;
}
.sheet-bar > .plain {
  height: 32px;
}
.sheet-bar > .plain .tri {
  opacity: 0.3;
}
.sheet-bar > .plain:nth-child(2) {
  margin-left: 28px;
}
.sheet-tab {
  width: 77px;
  height: 31px;
  margin: -1px 39px 0 48px;
  background: #fff;
  border: 1px solid #ababab;
  border-top: none;
  border-bottom: 2px solid #217346;
  color: #217346;
  font-size: 18px;
  font-weight: 700;
}
.horizontal {
  flex-direction: row;
  width: 780px;
  height: 25px;
  margin: 3px 0 0 auto;
}
.horizontal .thumb {
  flex-grow: 95;
}
.horizontal .track {
  flex-grow: 5;
  background: #dadada;
}

/* status bar */
.status {
  display: flex;
  align-items: center;
  height: 34px;
  flex: none;
  padding: 0 11px 2px;
  border-top: 1px solid #c8c6c4;
  background: linear-gradient(#c8c6c4, #c8c6c4) 72px 100% / 516px 2px no-repeat #f3f2f1;
  font-size: 15px;
}
.status input {
  appearance: none;
  width: 150px;
  height: 2px;
  margin: 0 8px 0 auto;
  background: #ababab;
}
.status .plain {
  margin-right: 20px;
}
```
FILE: script.js
```js
const THEMES = [
  { base: "#000000", dark: "#000000", band: "#d9d9d9", band2: "#a6a6a6", line: "#000000", deep: "#404040", mid: "#737373" },
  { base: "#4472c4", dark: "#305496", band: "#d9e1f2", band2: "#b4c6e7", line: "#8ea9db" },
  { base: "#ed7d31", dark: "#c65911", band: "#fce4d6", band2: "#f8cbad", line: "#f4b084" },
  { base: "#a5a5a5", dark: "#7b7b7b", band: "#ededed", band2: "#dbdbdb", line: "#c9c9c9" },
  { base: "#ffc000", dark: "#bf8f00", band: "#fff2cc", band2: "#ffe699", line: "#ffd966" },
  { base: "#5b9bd5", dark: "#2f75b5", band: "#ddebf7", band2: "#bdd7ee", line: "#9bc2e6" },
  { base: "#70ad47", dark: "#548235", band: "#e2efda", band2: "#c6e0b4", line: "#a9d08e" }
];

// fills: colour of each of the five rows, h: y index of the horizontal rules, v: x index of the vertical rules
const STYLES = {
  lines: t => ({ fills: ["#fff", t.band, "#fff", t.band, "#fff"], h: [0, 1, 5], v: [], line: t.base, dash: t.dark }),
  header: t => ({ fills: [t.base, "#fff", "#fff", "#fff", "#fff"], h: [0, 1, 2, 3, 4, 5], v: [0, 5], line: t.base, head: "#fff" }),
  grid: t => ({ fills: ["#fff", t.band, "#fff", t.band, "#fff"], h: [0, 1, 2, 3, 4, 5], v: [0, 1, 2, 3, 4, 5], line: t.base }),
  banded: t => ({ fills: [t.base, t.band, "#fff", t.band, "#fff"], h: [0, 1, 2, 3, 4, 5], v: [0, 5], line: t.line, head: "#fff" }),
  tiles: t => ({ fills: [t.base, t.band2, t.band, t.band2, t.band], h: [1, 2, 3, 4], v: [1, 2, 3, 4], line: "#fff", head: "#fff" }),
  ruled: (t, i) => ({ fills: [t.base, "#d9d9d9", "#fff", "#d9d9d9", "#fff"], h: i ? [0, 1, 5] : [0, 1, 2, 3, 4, 5], v: i ? [] : [0, 1, 2, 3, 4, 5], line: "#000", head: "#fff" }),
  filled: t => ({ fills: [t.band, t.band2, t.band, t.band2, t.band], h: [0, 1, 2, 3, 4, 5], v: [0, 1, 2, 3, 4, 5], line: t.line }),
  dark: t => ({ fills: ["#000", t.deep || t.dark, t.mid || t.base, t.deep || t.dark, t.mid || t.base], h: [1], v: [], line: "#fff", dash: "#fff" })
};

const SECTIONS = [
  ["Vaalea", ["lines", "header", "grid"]],
  ["Normaali", ["banded", "tiles", "ruled", "filled"]],
  ["Tumma", ["dark"]]
];

function rect(x, y, w, h, fill) {
  return `<rect x="${x}" y="${y}" width="${w}" height="${h}" fill="${fill}"/>`;
}

function swatch(s) {
  let out = "";
  // odd rows last, their fill runs one pixel into the next row
  [0, 2, 4, 1, 3].forEach(r => { out += rect(0, r * 13, 91, 14, s.fills[r]); });
  s.h.forEach(r => { out += rect(0, r * 13, 91, 1, s.line); });
  s.v.forEach(c => { out += rect(c * 18, 0, 1, 66, s.line); });
  for (let r = 0; r < 5; r++) {
    const color = r === 0 && s.head ? s.head : s.dash || "#000";
    for (let c = 0; c < 5; c++) out += rect(c * 18 + 4, r * 13 + 6, 10, 1, color);
  }
  return `<svg viewBox="0 0 91 66" shape-rendering="crispEdges">${out}</svg>`;
}

document.getElementById("gallery").innerHTML = SECTIONS.map(([title, kinds]) => {
  let n = 0;
  const items = kinds.map(kind => THEMES.map((t, i) =>
    `<button aria-label="${title} ${++n}">${swatch(STYLES[kind](t, i))}</button>`).join("")).join("");
  return `<div class="gallery-section"><h3>${title}</h3><div class="swatches">${items}</div></div>`;
}).join("");

const COLUMNS = "ABCDEFGHIJKLMNOPQRS".split("");
const WIDTHS = { B: 106, C: 118 };
const CELLS = {
  B3: ["Seinä pinta-ala", "spill"],
  B6: ["korkeus", "head"],
  C6: ["leveys", "head"],
  D6: ["m<sup>2</sup>", "head"]
};
[["6,5", "14,95"], ["8,8", "20,24"], ["9,3", "21,39"], ["2,5", "5,75"], ["8,5", "19,55"], ["3,4", "7,82"]].forEach(([w, a], i) => {
  CELLS["B" + (i + 7)] = ["2,3", "num height"];
  CELLS["C" + (i + 7)] = [w, "num width"];
  CELLS["D" + (i + 7)] = [a, "num area"];
});

let html = `<colgroup><col style="width:40px">${COLUMNS.map(c => `<col style="width:${WIDTHS[c] || 96}px">`).join("")}</colgroup>`;
html += `<thead><tr><th class="corner"></th>${COLUMNS.map(c => `<th>${c}</th>`).join("")}</tr></thead><tbody>`;
for (let r = 1; r <= 23; r++) {
  html += `<tr${r === 6 ? ' class="tall"' : ""}><th${r === 12 ? ' class="current"' : ""}>${r}</th>`;
  html += COLUMNS.map(c => {
    const [text, cls] = CELLS[c + r] || ["", ""];
    return `<td class="${cls}">${text}</td>`;
  }).join("") + "</tr>";
}
// the last row is only partly in view
html += `<tr><th></th>${COLUMNS.map(() => "<td></td>").join("")}</tr>`;
document.getElementById("grid").innerHTML = html + "</tbody>";
```
